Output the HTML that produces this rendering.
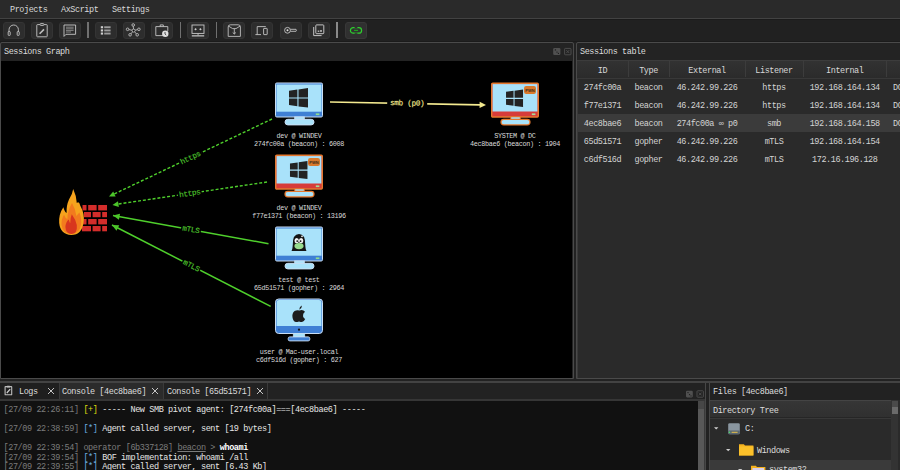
<!DOCTYPE html>
<html><head><meta charset="utf-8">
<style>
*{box-sizing:border-box;margin:0;padding:0}
html,body{width:900px;height:470px;overflow:hidden;background:#222;font-family:"Liberation Mono",monospace;color:#ddd}
.a{position:absolute}
.t{position:absolute;white-space:pre;font-size:8.5px;letter-spacing:-0.43px;line-height:12px}
.btn{position:absolute;top:21.5px;width:22px;height:17px;border-radius:3px;background:#2d2d2d;border:1px solid #343434}
.sep{position:absolute;top:22px;width:1.4px;height:16px;background:#707070}
.gl{position:absolute;white-space:pre;font-size:6.8px;letter-spacing:-0.33px;line-height:8px;color:#dadada;text-align:center;transform:translateX(-50%)}
.tc{text-align:center}
.con{position:absolute;white-space:pre;font-size:8.5px;letter-spacing:-0.40px;line-height:9.55px;color:#e6e6e6}
.con .g{color:#7c7c7c}.con .y{color:#dcdc10}.con .b{color:#6cb0e0}.con b{color:#fff}
.btn svg{position:absolute;left:-1px;top:-1px}
</style></head><body>
<!-- menu bar -->
<div class="a" style="left:0;top:0;width:900px;height:17.5px;background:#2a2a2a"></div>
<div class="t" style="left:10px;top:3.5px;color:#d8d8d8">Projects</div>
<div class="t" style="left:61px;top:3.5px;color:#d8d8d8">AxScript</div>
<div class="t" style="left:112px;top:3.5px;color:#d8d8d8">Settings</div>
<!-- toolbar -->
<div class="a" style="left:0;top:17.5px;width:900px;height:1px;background:#424242"></div>
<div class="a" style="left:0;top:18.5px;width:900px;height:23px;background:#212121"></div>
<div class="a" style="left:0;top:18.5px;width:900px;height:1px;background:#1b1b1b"></div>
<div class="a" style="left:0;top:40.5px;width:900px;height:1px;background:#1b1b1b"></div>


<!-- toolbar buttons -->
<div class="btn" style="left:2.5px"><svg width="22" height="17" viewBox="0 0 22 17"><g fill="none" stroke="#c4c4c4" stroke-width="0.9"><path d="M6,10 V7.7 A4.7,4.7 0 0 1 15.4,7.7 V10"/><rect x="5.2" y="9.6" width="2" height="3.8" rx="0.5"/><rect x="14.2" y="9.6" width="2" height="3.8" rx="0.5"/></g></svg></div>
<div class="btn" style="left:30.5px"><svg width="22" height="17" viewBox="0 0 22 17"><g fill="none" stroke="#b8b8b8" stroke-width="1"><rect x="5.8" y="2.6" width="10.4" height="12.2" rx="0.6"/><rect x="9" y="1.6" width="4" height="1.8" rx="0.8" fill="#2c2c2c"/></g><path d="M8.6,11.8 L13,7.4" stroke="#c0c0c0" stroke-width="1.6"/></svg></div>
<div class="btn" style="left:58.8px"><svg width="22" height="17" viewBox="0 0 22 17"><g fill="none" stroke="#c8c8c8" stroke-width="0.9"><path d="M5,3 H16.6 V12.3 H7 L5,14.4 Z"/></g><g stroke="#9a9a9a" stroke-width="0.8"><path d="M7,5.2 H14.6 M7,6.8 H14.6 M7,8.4 H14.6 M7,10 H12"/></g></svg></div>
<div class="sep" style="left:87.3px"></div>
<div class="btn" style="left:95px"><svg width="22" height="17" viewBox="0 0 22 17"><g fill="#cfcfcf"><rect x="5.8" y="4.2" width="2.3" height="2.1"/><rect x="5.8" y="7.4" width="2.3" height="2.1"/><rect x="5.8" y="10.5" width="2.3" height="2.1"/></g><g fill="#9c9c9c"><rect x="9.2" y="4.3" width="6.4" height="1.9"/><rect x="9.2" y="7.5" width="6.4" height="1.9"/><rect x="9.2" y="10.6" width="6.4" height="1.9"/></g></svg></div>
<div class="btn" style="left:123.4px"><svg width="22" height="17" viewBox="0 0 22 17"><g stroke="#bdbdbd" stroke-width="0.9" fill="#2c2c2c"><path d="M10.6,8.6 L10.2,3 M10.6,8.6 L4.6,7.3 M10.6,8.6 L15.9,7.3 M10.6,8.6 L7.1,12.8 M10.6,8.6 L14.2,12.8"/><circle cx="10.6" cy="8.6" r="1.5" fill="#111"/><circle cx="10.2" cy="3" r="1.3"/><circle cx="4.6" cy="7.3" r="1.3"/><circle cx="15.9" cy="7.3" r="1.3"/><circle cx="7.1" cy="12.8" r="1.3"/><circle cx="14.2" cy="12.8" r="1.3"/></g></svg></div>
<div class="btn" style="left:151.3px"><svg width="22" height="17" viewBox="0 0 22 17"><g fill="none" stroke="#c4c4c4" stroke-width="0.9"><path d="M12,13.6 H4.8 V4.6 H16.8 V9"/><path d="M9.2,4.6 V2.9 H12.3 V4.6"/></g><circle cx="14.3" cy="11.8" r="3.2" fill="#e0e0e0"/><path d="M14,10 V12 L15.2,13" stroke="#2c2c2c" stroke-width="0.8" fill="none"/></svg></div>
<div class="sep" style="left:179.8px"></div>
<div class="btn" style="left:187.2px"><svg width="22" height="17" viewBox="0 0 22 17"><g fill="none" stroke="#c8c8c8" stroke-width="0.9"><rect x="5" y="3" width="12" height="8.4"/></g><g fill="#d0d0d0"><path d="M7.2,7.2 L9,6 V8.4 Z M14.8,7.2 L13,6 V8.4 Z"/><rect x="8.6" y="6.8" width="1.2" height="0.8"/><rect x="12.2" y="6.8" width="1.2" height="0.8"/></g><g fill="#bdbdbd"><rect x="10.6" y="11.4" width="0.9" height="2"/><rect x="4.8" y="13.2" width="12.4" height="1.3"/></g></svg></div>
<div class="sep" style="left:215.8px"></div>
<div class="btn" style="left:223.2px"><svg width="22" height="17" viewBox="0 0 22 17"><g fill="none" stroke="#c0c0c0" stroke-width="0.9"><path d="M5.2,5 Q5.2,2.8 7.4,2.8 H15.2 Q17.4,2.8 17.4,5 V14.4 H5.2 Z"/><path d="M5.4,4 L9.6,6.6 M17.2,4 L13,6.6 M9.6,6.6 H13"/><path d="M11.3,7 V12 M9.7,10.5 L11.3,12 L12.9,10.5"/></g></svg></div>
<div class="btn" style="left:251.4px"><svg width="22" height="17" viewBox="0 0 22 17"><g fill="none" stroke="#c4c4c4" stroke-width="0.9"><path d="M6.2,12.6 V4.6 H14.8"/><path d="M4.4,12.6 H10"/><rect x="12.6" y="6.4" width="3.6" height="6.2" rx="0.4"/></g></svg></div>
<div class="btn" style="left:280px"><svg width="22" height="17" viewBox="0 0 22 17"><g fill="none" stroke="#c4c4c4" stroke-width="0.9"><circle cx="7.5" cy="8.3" r="2.9"/><path d="M10.4,7.3 H16 Q16.9,8.3 16,9.3 H10.4"/></g><circle cx="7.5" cy="8.3" r="1" fill="#e4e4e4"/></svg></div>
<div class="btn" style="left:308.3px"><svg width="22" height="17" viewBox="0 0 22 17"><g fill="none" stroke="#c4c4c4" stroke-width="1"><rect x="7.8" y="2.9" width="8" height="8.8" rx="0.8"/><path d="M5.7,5 V13.6 H13.6"/></g><g fill="#d0d0d0"><rect x="9.7" y="8.6" width="1.6" height="1.2"/><rect x="12.2" y="8.1" width="1.6" height="1.7"/></g></svg></div>
<div class="sep" style="left:336.4px;background:#8a8a8a"></div>
<div class="btn" style="left:344.5px;background:#303030;border-color:#383838"><svg width="22" height="17" viewBox="0 0 22 17"><rect x="5.4" y="5.6" width="11.2" height="5.6" rx="2.8" fill="none" stroke="#2ed12e" stroke-width="1.2"/><rect x="9" y="7.8" width="4" height="1.2" fill="#1fa01f"/><rect x="9.6" y="5" width="2.8" height="1.2" fill="#303030"/><rect x="9.6" y="10.6" width="2.8" height="1.2" fill="#303030"/></svg></div>


<!-- Sessions graph panel -->
<div class="a" style="left:0;top:42px;width:573.5px;height:337px;border:1px solid #4a4a4a;border-radius:2px 2px 0 0;background:#232323"></div>
<div class="t" style="left:4px;top:45.5px;color:#dcdcdc">Sessions Graph</div>
<div class="a" style="left:1px;top:60.5px;width:571.3px;height:317px;background:#000"></div>
<svg class="a" style="left:552px;top:47px" width="21" height="10" viewBox="0 0 21 10"><rect x="1.2" y="1.1" width="7.2" height="6.8" rx="1.2" fill="#505050"/><g fill="#1a1a1a"><circle cx="3.4" cy="2.9" r="0.7"/><circle cx="5" cy="5.1" r="0.7"/><circle cx="6.4" cy="6.4" r="0.6"/></g><g fill="none" stroke="#575757" stroke-width="0.8"><rect x="12.6" y="1.4" width="6.4" height="6.4" rx="0.8"/><path d="M14.3,3.1 L17.3,6.1 M17.3,3.1 L14.3,6.1"/></g></svg>

<!-- graph -->
<svg class="a" style="left:0;top:0" width="900" height="470" viewBox="0 0 900 470">
<defs>
<g id="winlogo"><g fill="#232323">
<path d="M14,8.2 L22.4,7.1 V14.9 H14 Z"/><path d="M23.5,6.9 L33,5.6 V14.9 H23.5 Z"/>
<path d="M14,16.1 H22.4 V23.7 L14,22.6 Z"/><path d="M23.5,16.1 H33 V25.1 L23.5,23.9 Z"/>
</g></g>
<g id="monBlue">
<rect x="0.5" y="0.5" width="47" height="34" rx="1.3" fill="#3f7fd4" stroke="#c9def4" stroke-width="1"/>
<rect x="1.5" y="2" width="45" height="27.2" fill="#a9e2fa"/>
<rect x="40.8" y="30.9" width="3.6" height="1.7" fill="#8fdc8f"/>
<rect x="19.2" y="34" width="10.6" height="3.4" fill="#c9def4"/><rect x="20.2" y="34.8" width="8.6" height="2" fill="#a9e2fa"/>
<rect x="10" y="36.8" width="29" height="5.6" rx="2.8" fill="#a9e2fa" stroke="#c9def4" stroke-width="1"/>
</g>
<g id="monRed">
<rect x="0.7" y="0.7" width="46.6" height="33.8" rx="1" fill="#d63c3a" stroke="#e5782e" stroke-width="1.4"/>
<rect x="1.6" y="1.6" width="44.8" height="27.4" fill="#a9e2fa"/>
<rect x="40.8" y="30.9" width="3.6" height="1.7" fill="#a8dc98"/>
<rect x="19.2" y="34" width="10.6" height="3.4" fill="#e5782e"/><rect x="20.2" y="34.8" width="8.6" height="2" fill="#a9e2fa"/>
<rect x="10" y="36.8" width="29" height="5.6" rx="2.8" fill="#a9e2fa" stroke="#e5782e" stroke-width="1.2"/>
<rect x="33" y="3.5" width="12" height="8" rx="2.2" fill="#d9792c"/>
<text x="39" y="9.3" font-size="4" text-anchor="middle" fill="#3a2a1a" font-family="Liberation Sans" font-weight="bold">PWN</text>
</g>
</defs>
<!-- edges -->
<g stroke="#4fd02c" stroke-width="1.5" fill="none">
<path d="M272,119 L112,195" stroke-dasharray="3 1.9" stroke-width="1.4"/>
<path d="M267,182 L115,204.5" stroke-dasharray="3 1.9" stroke-width="1.4"/>
<path d="M268.5,243.7 L113,215.5"/>
<path d="M270.7,306.4 L112,225"/>
</g>
<g fill="#4cc52a">
<path d="M0,0 L6,-2.8 L6,2.8 Z" transform="translate(109,196.5) rotate(-25.4)"/>
<path d="M0,0 L6,-2.8 L6,2.8 Z" transform="translate(112.5,205) rotate(-8.5)"/>
<path d="M0,0 L6.6,-3 L6.6,3 Z" transform="translate(113,215.5) rotate(10.3)"/>
<path d="M0,0 L6.6,-3 L6.6,3 Z" transform="translate(112,225) rotate(27.2)"/>
</g>
<path d="M330,102 L480,104.9" stroke="#f4ea90" stroke-width="1.7"/>
<path d="M0,0 L-6.4,-3.2 L-6.4,3.2 Z" fill="#f2e88e" transform="translate(486,105) rotate(1.1)"/>
<!-- edge labels -->
<g font-family="Liberation Mono" font-size="7.7" letter-spacing="-0.3" text-anchor="middle" fill="#4cc02c" stroke="#4cc02c" stroke-width="0.15">
<g transform="translate(190.5,157.8) rotate(-25.4)"><rect x="-12" y="-4" width="24" height="8" fill="#000" stroke="none"/><text x="0" y="2.2">https</text></g>
<g transform="translate(189.8,193.5) rotate(-8.5)"><rect x="-12" y="-4" width="24" height="8" fill="#000" stroke="none"/><text x="0" y="2.2">https</text></g>
<g transform="translate(191,229.6) rotate(10.3)"><rect x="-10" y="-4" width="20" height="8" fill="#000" stroke="none"/><text x="0" y="2.2">mTLS</text></g>
<g transform="translate(191.3,265.7) rotate(27.2)"><rect x="-10" y="-4" width="20" height="8" fill="#000" stroke="none"/><text x="0" y="2.2">mTLS</text></g>
</g>
<g transform="translate(407.2,103.5) rotate(1.1)"><rect x="-20" y="-4" width="40" height="8" fill="#000" stroke="none"/><text x="0" y="1.8" font-family="Liberation Mono" font-size="7.7" letter-spacing="-0.3" text-anchor="middle" fill="#f2e88e" stroke="#f2e88e" stroke-width="0.15">smb (p0)</text></g>

<!-- nodes -->
<g transform="translate(275,82.5)"><use href="#monBlue"/><use href="#winlogo"/></g>
<g transform="translate(491,82.5)"><use href="#monRed"/><use href="#winlogo" transform="translate(2.5,2) scale(0.895,0.897)"/></g>
<g transform="translate(275,154.5)"><use href="#monRed"/><use href="#winlogo" transform="translate(2.1,1.4) scale(0.92,0.92)"/></g>
<g transform="translate(275,226.5)"><use href="#monBlue"/>
 <path d="M16.5,24.5 Q17.5,23 17.8,18 Q17.6,7.5 24,7.4 Q30.4,7.5 30.2,18 Q30.5,23 31.5,24.5 Z" fill="#141414"/>
 <ellipse cx="21.7" cy="14.2" rx="2.2" ry="2.6" fill="#f4f4f4"/><ellipse cx="26.1" cy="14.2" rx="2.2" ry="2.6" fill="#f4f4f4"/>
 <circle cx="22.2" cy="14.6" r="0.9" fill="#111"/><circle cx="25.6" cy="14.6" r="0.9" fill="#111"/>
 <ellipse cx="24" cy="19.6" rx="4.6" ry="3.1" fill="#98dc8e"/>
 <circle cx="27" cy="9.8" r="0.9" fill="#eee"/>
</g>
<g transform="translate(275,298.5)">
 <rect x="0.5" y="0.5" width="47" height="34.5" rx="3.2" fill="#3f7fd4" stroke="#c9def4" stroke-width="1"/>
 <path d="M1.6,4 Q1.6,1.6 4,1.6 H44 Q46.4,1.6 46.4,4 V27.4 H1.6 Z" fill="#a9e2fa"/>
 <circle cx="24" cy="31.2" r="1.1" fill="#111"/>
 <rect x="18.2" y="35" width="11.6" height="3.6" fill="#a9e2fa" stroke="#c9def4" stroke-width="0.6"/>
 <rect x="13.2" y="38.4" width="21.6" height="4" rx="1.6" fill="#3f7fd4" stroke="#c9def4" stroke-width="0.9"/>
 <g transform="translate(0,-1)"><path d="M24.4,13 Q28,11.8 30,14.2 Q27.6,15.8 28,18.8 Q28.6,21 30.2,21.6 Q29,24.4 27,24.6 Q25.6,24.6 24,24 Q22.4,24.6 21,24.6 Q18.6,24.4 17.6,20.6 Q16.6,15.6 19.6,13.4 Q22,12.2 24.4,13 Z" fill="#1c1c1c"/>
 <path d="M24.2,12.2 Q24.4,9 27,8 Q27,11 24.2,12.2 Z" fill="#1c1c1c"/></g>
</g>
<!-- firewall -->
<g fill="#d42d2b">
<rect x="82.5" y="205" width="4" height="5.4"/><rect x="88.2" y="205" width="8.4" height="5.4"/><rect x="98.2" y="205" width="8.8" height="5.4"/>
<rect x="84" y="212" width="7" height="5.2"/><rect x="92.6" y="212" width="8" height="5.2"/><rect x="102.2" y="212" width="4.8" height="5.2"/>
<rect x="82.5" y="219" width="4" height="5.4"/><rect x="88.2" y="219" width="8.4" height="5.4"/><rect x="98.2" y="219" width="8.8" height="5.4"/>
<rect x="82" y="226" width="9" height="5.3"/><rect x="92.6" y="226" width="8" height="5.3"/><rect x="102.2" y="226" width="4.8" height="5.3"/>
</g>
<path d="M73.2,189 Q76.5,196 76.8,203 Q79,200.5 80.2,205.4 Q85,214 83.6,222 Q82,235 71.2,235 Q60.4,234.6 59.2,223 Q58.6,214 63.4,207.2 Q64.6,212 66.6,213 Q66.2,205.6 69,199.5 Q72.5,194 73.2,189 Z" fill="#f6a31d"/>
<path d="M72,203 Q75.6,209 76.4,216 Q78.2,214 79.4,212.6 Q82,219 81,225 Q79.4,233.6 71.4,233.8 Q63,233.6 61.6,225.4 Q61,219.6 64,214.8 Q65.4,218.6 67.4,219 Q67.4,211 72,203 Z" fill="#f27b1e"/>
<path d="M71.8,214.2 Q75.6,219.4 76.8,225 Q77.6,233.6 71.6,234 Q65.6,233.8 65.4,227 Q65.8,222 68.8,219.6 Q69.4,222.4 70.2,223.2 Q70.2,218 71.8,214.2 Z" fill="#d8361e"/>
</svg>
<!-- node labels -->
<div class="gl" style="left:299px;top:131.5px">dev @ WINDEV<br>274fc00a (beacon) : 6008</div>
<div class="gl" style="left:515px;top:131.5px">SYSTEM @ DC<br>4ec8bae6 (beacon) : 1904</div>
<div class="gl" style="left:299px;top:203.5px">dev @ WINDEV<br>f77e1371 (beacon) : 13196</div>
<div class="gl" style="left:299px;top:275.5px">test @ test<br>65d51571 (gopher) : 2964</div>
<div class="gl" style="left:299px;top:347.5px">user @ Mac-user.local<br>c6df516d (gopher) : 627</div>

<!-- Sessions table panel -->
<div class="a" style="left:576px;top:42px;width:330px;height:337px;border:1px solid #4a4a4a;border-radius:2px 2px 0 0;background:#232323"></div>
<div class="t" style="left:580px;top:45.5px;color:#dcdcdc">Sessions table</div>
<div class="a" style="left:577px;top:60px;width:330px;height:317.5px;background:#2a2a2a;border-left:1px solid #3a3a3a"></div>

<div class="a" style="left:577px;top:59.5px;width:323px;height:19px;background:linear-gradient(#323232,#2b2b2b);border-top:1px solid #3c3c3c;border-bottom:1px solid #383838"></div>
<div class="a" style="left:627.5px;top:61px;width:1px;height:16px;background:#3c3c3c"></div>
<div class="a" style="left:668.5px;top:61px;width:1px;height:16px;background:#3c3c3c"></div>
<div class="a" style="left:744.5px;top:61px;width:1px;height:16px;background:#3c3c3c"></div>
<div class="a" style="left:802.5px;top:61px;width:1px;height:16px;background:#3c3c3c"></div>
<div class="a" style="left:886.0px;top:61px;width:1px;height:16px;background:#3c3c3c"></div>
<div class="t tc" style="left:577px;width:51px;top:65px;color:#d8d8d8">ID</div>
<div class="t tc" style="left:628px;width:41px;top:65px;color:#d8d8d8">Type</div>
<div class="t tc" style="left:669px;width:76px;top:65px;color:#d8d8d8">External</div>
<div class="t tc" style="left:745px;width:58px;top:65px;color:#d8d8d8">Listener</div>
<div class="t tc" style="left:803px;width:83.5px;top:65px;color:#d8d8d8">Internal</div>
<div class="a" style="left:577px;top:114px;width:323px;height:18px;background:#3b3b3b"></div>
<div class="t tc" style="left:577px;width:51px;top:82px;color:#d4d4d4">274fc00a</div>
<div class="t tc" style="left:628px;width:41px;top:82px;color:#d4d4d4">beacon</div>
<div class="t tc" style="left:669px;width:76px;top:82px;color:#d4d4d4">46.242.99.226</div>
<div class="t tc" style="left:745px;width:58px;top:82px;color:#d4d4d4">https</div>
<div class="t tc" style="left:803px;width:83.5px;top:82px;color:#d4d4d4">192.168.164.134</div>
<div class="t" style="left:893.0px;top:82px;color:#d4d4d4">DOMAIN</div>
<div class="t tc" style="left:577px;width:51px;top:100px;color:#d4d4d4">f77e1371</div>
<div class="t tc" style="left:628px;width:41px;top:100px;color:#d4d4d4">beacon</div>
<div class="t tc" style="left:669px;width:76px;top:100px;color:#d4d4d4">46.242.99.226</div>
<div class="t tc" style="left:745px;width:58px;top:100px;color:#d4d4d4">https</div>
<div class="t tc" style="left:803px;width:83.5px;top:100px;color:#d4d4d4">192.168.164.134</div>
<div class="t" style="left:893.0px;top:100px;color:#d4d4d4">DOMAIN</div>
<div class="t tc" style="left:577px;width:51px;top:118px;color:#d4d4d4">4ec8bae6</div>
<div class="t tc" style="left:628px;width:41px;top:118px;color:#d4d4d4">beacon</div>
<div class="t tc" style="left:669px;width:76px;top:118px;color:#d4d4d4">274fc00a ∞ p0</div>
<div class="t tc" style="left:745px;width:58px;top:118px;color:#d4d4d4">smb</div>
<div class="t tc" style="left:803px;width:83.5px;top:118px;color:#d4d4d4">192.168.164.158</div>
<div class="t" style="left:893.0px;top:118px;color:#d4d4d4">DOMAIN</div>
<div class="t tc" style="left:577px;width:51px;top:136px;color:#d4d4d4">65d51571</div>
<div class="t tc" style="left:628px;width:41px;top:136px;color:#d4d4d4">gopher</div>
<div class="t tc" style="left:669px;width:76px;top:136px;color:#d4d4d4">46.242.99.226</div>
<div class="t tc" style="left:745px;width:58px;top:136px;color:#d4d4d4">mTLS</div>
<div class="t tc" style="left:803px;width:83.5px;top:136px;color:#d4d4d4">192.168.164.154</div>
<div class="t tc" style="left:577px;width:51px;top:154px;color:#d4d4d4">c6df516d</div>
<div class="t tc" style="left:628px;width:41px;top:154px;color:#d4d4d4">gopher</div>
<div class="t tc" style="left:669px;width:76px;top:154px;color:#d4d4d4">46.242.99.226</div>
<div class="t tc" style="left:745px;width:58px;top:154px;color:#d4d4d4">mTLS</div>
<div class="t tc" style="left:803px;width:83.5px;top:154px;color:#d4d4d4">172.16.196.128</div>
<!-- bottom area -->


<!-- console panel -->
<div class="a" style="left:0;top:382px;width:706px;height:90px;background:#222;border-right:1px solid #474747;border-left:1px solid #474747"></div>
<div class="a" style="left:0;top:383px;width:59px;height:16px;background:#1f1f1f"></div>
<div class="a" style="left:59px;top:383px;width:105px;height:16px;background:#2b2b2b;border-left:1px solid #3a3a3a;border-right:1px solid #3a3a3a"></div>
<div class="a" style="left:164px;top:383px;width:104px;height:16px;background:#222;border-right:1px solid #3a3a3a"></div>
<div class="a" style="left:0;top:399px;width:705px;height:1.7px;background:#363636"></div>
<svg class="a" style="left:3.5px;top:384.5px" width="10" height="12" viewBox="0 0 10 12"><g fill="none" stroke="#bdbdbd" stroke-width="1.1"><rect x="1.1" y="1.6" width="6.6" height="8.2" rx="0.4"/></g><rect x="2.8" y="0.8" width="3.2" height="1.6" rx="0.5" fill="#bdbdbd"/><path d="M2.8,8 L6.2,4.2" stroke="#d0d0d0" stroke-width="1.2"/></svg>
<div class="t" style="left:19px;top:386px;color:#dcdcdc">Logs</div>
<svg class="a" style="left:47.2px;top:387px" width="8" height="8" viewBox="0 0 8 8"><path d="M1,1 L7,7 M7,1 L1,7" stroke="#d8d8d8" stroke-width="0.9"/></svg>
<div class="t" style="left:62px;top:386px;color:#dcdcdc">Console [4ec8bae6]</div>
<svg class="a" style="left:151.2px;top:387px" width="8" height="8" viewBox="0 0 8 8"><path d="M1,1 L7,7 M7,1 L1,7" stroke="#d8d8d8" stroke-width="0.9"/></svg>
<div class="t" style="left:167px;top:386px;color:#dcdcdc">Console [65d51571]</div>
<svg class="a" style="left:256.2px;top:387px" width="8" height="8" viewBox="0 0 8 8"><path d="M1,1 L7,7 M7,1 L1,7" stroke="#d8d8d8" stroke-width="0.9"/></svg>
<svg class="a" style="left:685px;top:390px" width="20" height="8" viewBox="0 0 20 8"><rect x="1" y="0.8" width="6.8" height="6.6" rx="1.1" fill="#505050"/><g fill="#1a1a1a"><circle cx="3" cy="2.6" r="0.65"/><circle cx="4.6" cy="4.6" r="0.65"/><circle cx="6" cy="5.9" r="0.55"/></g><g fill="none" stroke="#575757" stroke-width="0.8"><rect x="12" y="0.8" width="6.4" height="6.4" rx="0.8"/><path d="M13.8,2.6 L16.6,5.4 M16.6,2.6 L13.8,5.4"/></g></svg>
<div class="a" style="left:0;top:400.7px;width:705px;height:70px;background:#111"></div>
<div class="a" style="left:698.5px;top:401px;width:6px;height:69px;background:#3a3a3a"></div>
<div class="a" style="left:698.2px;top:401px;width:6px;height:8px;background:#474747"></div>
<div class="a" style="left:698.2px;top:409px;width:6px;height:61px;background:#585858"></div>
<div class="con" style="left:3.5px;top:406px"><span class="g">[27/09 22:26:11]</span> <span class="y">[+]</span> ----- New SMB pivot agent: [274fc00a]===[4ec8bae6] -----

<span class="g">[27/09 22:38:59]</span> <span class="b">[*]</span> Agent called server, sent [19 bytes]

<span class="g">[27/09 22:39:54] operator [6b337128] <u>beacon</u> &gt;</span> <b>whoami</b>
<span class="g">[27/09 22:39:54]</span> <span class="b">[*]</span> BOF implementation: whoami /all
<span class="g">[27/09 22:39:55]</span> <span class="b">[*]</span> Agent called server, sent [6.43 Kb]</div>

<!-- files panel -->
<div class="a" style="left:709px;top:382px;width:200px;height:90px;background:#222;border-left:1px solid #474747"></div>
<div class="a" style="left:0;top:380.8px;width:900px;height:2px;background:#434343"></div>
<div class="t" style="left:713px;top:386px;color:#dcdcdc">Files [4ec8bae6]</div>
<div class="a" style="left:710px;top:400px;width:190px;height:70px;background:#2a2a2a"></div>
<div class="a" style="left:710px;top:400px;width:181px;height:18px;background:linear-gradient(#363636,#303030);border-top:1px solid #444;border-bottom:1px solid #262626"></div>
<div class="t" style="left:713px;top:405px;color:#dcdcdc">Directory Tree</div>
<div class="a" style="left:710px;top:417.6px;width:181px;height:1.2px;background:#383838"></div>
<div class="a" style="left:891px;top:400px;width:7px;height:70px;background:#333"></div>
<div class="a" style="left:891.5px;top:401px;width:6px;height:6px;background:#4a4a4a"></div>
<div class="a" style="left:891.5px;top:407px;width:6px;height:7px;background:#6a6a6a"></div>
<div class="a" style="left:710px;top:459.5px;width:181px;height:11px;background:#3a3a3a"></div>
<svg class="a" style="left:710px;top:418px" width="181" height="52" viewBox="0 0 181 52">
<path d="M4,9.2 L8.4,9.2 L6.2,11.4 Z" fill="#cfcfcf"/>
<path d="M16,31 L20.4,31 L18.2,33.2 Z" fill="#cfcfcf"/>
<path d="M28,51 L32.4,51 L30.2,53.2 Z" fill="#cfcfcf"/>
<rect x="18.2" y="5.2" width="11.6" height="11" rx="1.4" fill="#8a96a0"/>
<rect x="18.2" y="12.6" width="11.6" height="3.6" rx="0.8" fill="#5a6670"/>
<rect x="18.8" y="13.6" width="1.4" height="1.4" fill="#4ce06a"/>
<rect x="21.6" y="13.8" width="6" height="1" fill="#e8c04a"/>
<path d="M29,26.2 H33.8 L35,27.4 H43.4 V37.4 H29 Z" fill="#f5b21e"/>
<rect x="29" y="28.4" width="14.4" height="9" fill="#fbc02a"/>
<path d="M41,47.8 H45.8 L47,49 H55.4 V56 H41 Z" fill="#f5b21e"/>
<rect x="42.4" y="50" width="11.6" height="6" fill="#d8d0ea"/>
</svg>
<div class="t" style="left:745px;top:423px;color:#dcdcdc">C:</div>
<div class="t" style="left:757px;top:445px;color:#dcdcdc">Windows</div>
<div class="t" style="left:769px;top:463.5px;color:#dcdcdc">system32</div>

</body></html>
